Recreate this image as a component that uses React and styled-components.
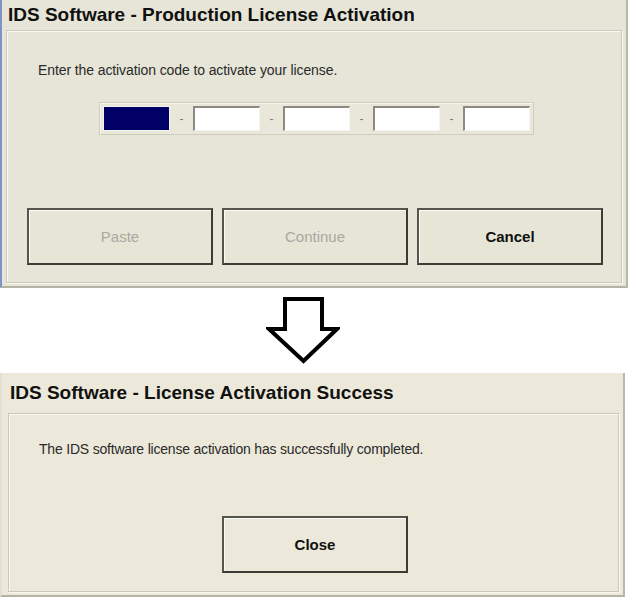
import styled, { createGlobalStyle } from 'styled-components';

const GlobalStyle = createGlobalStyle`
  body {
    margin: 0;
    background: #ffffff;
    font-family: "Liberation Sans", Arial, sans-serif;
  }
`;

const Page = styled.div`
  width: 630px;
  display: flex;
  flex-direction: column;
`;

const Dialog = styled.div`
  width: ${(props) => props.width}px;
  height: ${(props) => props.height}px;
  box-sizing: border-box;
  background: ${(props) => props.bg};
  border-left: 2px solid ${(props) => props.edge};
  border-right: 2px solid #b9b8aa;
  border-bottom: 2px solid #b4b3a6;
  display: flex;
  flex-direction: column;
  padding: 0 4px 3px ${(props) => props.inset}px;
`;

const Title = styled.div`
  font-weight: bold;
  font-size: 19px;
  color: #111;
  height: ${(props) => props.h}px;
  display: flex;
  align-items: center;
  padding-left: ${(props) => props.indent}px;
`;

const Panel = styled.div`
  flex: 1;
  border: 1px solid #cbc9ba;
  box-shadow: inset 1px 1px 0 #fafaf4, 1px 1px 0 #fafaf4;
  display: flex;
  flex-direction: column;
`;

const Prompt = styled.div`
  font-size: 14px;
  color: #2a2a2a;
  letter-spacing: ${(props) => props.spacing}px;
  padding-left: ${(props) => props.indent}px;
  margin-top: ${(props) => props.top}px;
`;

const CodeGroup = styled.div`
  align-self: flex-start;
  margin: 24px 0 0 92px;
  padding: 3px;
  display: flex;
  align-items: center;
  border: 1px solid #cfcdbe;
  box-shadow: inset 1px 1px 0 #f6f5ee;
  background: #e9e7da;
`;

const Field = styled.div`
  width: 67px;
  height: 25px;
  box-sizing: border-box;
  background: ${(props) => (props.active ? '#000066' : '#ffffff')};
  border-top: ${(props) => (props.active ? 1 : 2)}px solid ${(props) => (props.active ? '#f4f4f4' : '#8a8a80')};
  border-left: ${(props) => (props.active ? 1 : 2)}px solid ${(props) => (props.active ? '#f4f4f4' : '#8a8a80')};
  border-right: 1px solid #f4f4f0;
  border-bottom: 1px solid #f4f4f0;
`;

const Dash = styled.span`
  width: 23px;
  text-align: center;
  font-size: 12px;
  color: #777;
`;

const ButtonRow = styled.div`
  display: flex;
  gap: 9px;
  margin-top: ${(props) => props.top}px;
  padding-left: ${(props) => props.indent}px;
`;

const Button = styled.button`
  width: 186px;
  height: 57px;
  box-sizing: border-box;
  background: ${(props) => props.bg || '#e6e5d6'};
  border: 2px solid #55554d;
  border-right-color: #3c3c36;
  border-bottom-color: #3c3c36;
  box-shadow: inset 1px 1px 0 #fbfbf6;
  font-family: "Liberation Sans", Arial, sans-serif;
  font-size: 15px;
  font-weight: ${(props) => (props.disabled ? 'normal' : 'bold')};
  color: ${(props) => (props.disabled ? '#a9a9a2' : '#111')};
  padding: 0;
`;

const ArrowArea = styled.div`
  height: 85px;
  display: flex;
  align-items: flex-start;
  padding: 9px 0 0 266px;
  box-sizing: border-box;
`;

function DownArrow() {
  return (
    <svg width="74" height="68" viewBox="0 0 74 68">
      <path
        d="M19 2 H56 V32 H71 L37.5 64 L3 32 H19 Z"
        fill="#fff"
        stroke="#000"
        strokeWidth="4"
        strokeLinejoin="miter"
      />
    </svg>
  );
}

export default function App() {
  return (
    <Page>
      <GlobalStyle />
      <Dialog width={628} height={288} bg="#e6e5d7" edge="#7f93c8" inset={4}>
        <Title h={30} indent={2}>IDS Software - Production License Activation</Title>
        <Panel>
          <Prompt indent={31} top={31} spacing={-0.1}>Enter the activation code to activate your license.</Prompt>
          <CodeGroup>
            <Field active />
            <Dash>-</Dash>
            <Field />
            <Dash>-</Dash>
            <Field />
            <Dash>-</Dash>
            <Field />
            <Dash>-</Dash>
            <Field />
          </CodeGroup>
          <ButtonRow top={73} indent={20}>
            <Button disabled>Paste</Button>
            <Button disabled>Continue</Button>
            <Button>Cancel</Button>
          </ButtonRow>
        </Panel>
      </Dialog>
      <ArrowArea>
        <DownArrow />
      </ArrowArea>
      <Dialog width={625} height={224} bg="#ece9db" edge="#e2e0d2" inset={6}>
        <Title h={40} indent={2}>IDS Software - License Activation Success</Title>
        <Panel>
          <Prompt indent={30} top={27} spacing={-0.2}>The IDS software license activation has successfully completed.</Prompt>
          <ButtonRow top={59} indent={213}>
            <Button bg="#ece9db">Close</Button>
          </ButtonRow>
        </Panel>
      </Dialog>
    </Page>
  );
}
